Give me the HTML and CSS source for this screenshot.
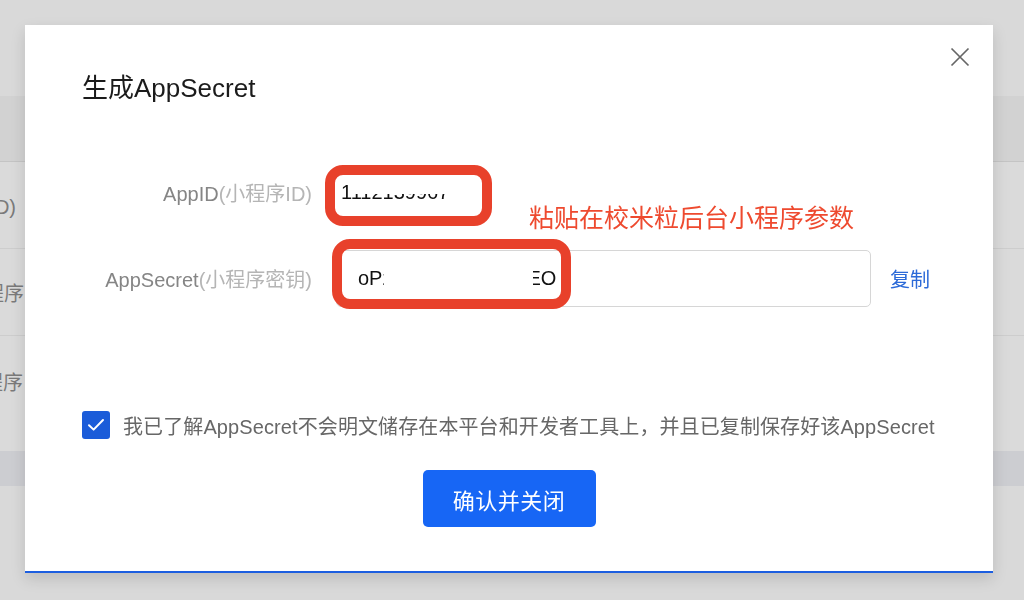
FILE: index.html
```html
<!DOCTYPE html>
<html lang="zh-CN">
<head>
<meta charset="utf-8">
<title>生成AppSecret</title>
<link rel="stylesheet" href="styles.css">
</head>
<body>
<div class="page">
  <div class="bg-top"></div>
  <div class="bg-head"></div>
  <div class="bg-row"><div class="bg-cell"><span>AppID(小程序ID)</span></div></div>
  <div class="bg-row"><div class="bg-cell wide"><span>AppSecret(小程序</span></div></div>
  <div class="bg-row tall"><div class="bg-cell mid"><span>小程序</span></div></div>
  <div class="bg-band"></div>
</div>

<div class="modal">
  <button class="close" aria-label="关闭">
    <svg width="20" height="20" viewBox="0 0 20 20"><path d="M1.5 1.5 L18.5 18.5 M18.5 1.5 L1.5 18.5" stroke="#666" stroke-width="1.7" fill="none"/></svg>
  </button>
  <h1 class="title">生成AppSecret</h1>

  <div class="form">
    <div class="row">
      <div class="label">AppID<span class="sub">(小程序ID)</span></div>
      <div class="plain-value">
        <span>1112139967</span>
        <div class="redact r1"></div>
      </div>
    </div>
    <div class="row">
      <div class="label">AppSecret<span class="sub">(小程序密钥)</span></div>
      <div class="input">
        <span>oPz</span><span class="gap"></span><span>EO</span>
        <div class="redact r2"></div>
      </div>
      <a class="copy">复制</a>
    </div>
  </div>

  <label class="agree">
    <span class="check">
      <svg width="18" height="14" viewBox="0 0 18 14"><path d="M2 7.2 L6.6 11.6 L16 2" stroke="#fff" stroke-width="2" fill="none" stroke-linecap="round" stroke-linejoin="round"/></svg>
    </span>
    <span class="agree-text">我已了解AppSecret不会明文储存在本平台和开发者工具上，并且已复制保存好该AppSecret</span>
  </label>

  <div class="actions">
    <button class="primary">确认并关闭</button>
  </div>

  <div class="mark m1"></div>
  <div class="mark m2"></div>
  <div class="note">粘贴在校米粒后台小程序参数</div>
</div>
</body>
</html>
```

FILE: styles.css
```css
* { box-sizing: border-box; }
html, body { margin: 0; padding: 0; }
body {
  width: 1024px;
  height: 600px;
  overflow: hidden;
  background: #d9d9d9;
  font-family: "Liberation Sans", "Noto Sans CJK SC", sans-serif;
}

.page { display: flex; flex-direction: column; }
.bg-top { height: 96px; background: #d9d9d9; }
.bg-head { height: 66px; background: #d2d2d2; border-bottom: 1px solid #c4c4c4; }
.bg-row {
  height: 87px;
  background: #dadada;
  border-bottom: 1px solid #cdcdcd;
  display: flex;
  align-items: center;
}
.bg-row.tall { height: 115px; border-bottom: none; padding-bottom: 25px; }
.bg-cell {
  width: 16px;
  display: flex;
  justify-content: flex-end;
  overflow: hidden;
  white-space: nowrap;
  font-size: 20px;
  color: #7a7a7a;
}
.bg-cell.wide { width: 24px; }
.bg-cell.mid { width: 23px; }
.bg-cell span { flex: none; }
.bg-band { height: 35px; background: #cccdd1; }

.modal {
  position: fixed;
  left: 25px;
  top: 25px;
  width: 968px;
  height: 548px;
  background: #fff;
  border-bottom: 2px solid #1c5ee0;
  box-shadow: 0 6px 14px rgba(0, 0, 0, 0.13);
  padding: 47px 57px 0;
  display: flex;
  flex-direction: column;
}

.close {
  position: absolute;
  right: 23px;
  top: 22px;
  width: 20px;
  height: 20px;
  padding: 0;
  border: 0;
  background: none;
  display: flex;
}

.title {
  margin: 0;
  font-size: 26px;
  line-height: 32px;
  font-weight: normal;
  color: #1b1b1b;
}

.form {
  margin-top: 60px;
  display: flex;
  flex-direction: column;
  gap: 29px;
}
.row {
  display: flex;
  align-items: center;
  height: 57px;
  gap: 24px;
}
.label {
  width: 230px;
  text-align: right;
  font-size: 20px;
  color: #858585;
  white-space: nowrap;
}
.label .sub { color: #b5b5b5; }

.plain-value {
  position: relative;
  padding-left: 5px;
  font-size: 20px;
  color: #111;
}
.input {
  position: relative;
  width: 535px;
  height: 57px;
  border: 1px solid #d6d6d6;
  border-radius: 5px;
  padding-left: 21px;
  display: flex;
  align-items: center;
  font-size: 20px;
  color: #111;
}
.input .gap { display: inline-block; width: 135px; }
.copy {
  margin-left: -5px;
  font-size: 20px;
  color: #2c6ad8;
  cursor: pointer;
}

.redact { position: absolute; background: #fff; }
.redact.r1 { left: 16px; top: 0; width: 105px; height: 13px; }
.redact.r2 { left: 47px; top: 10px; width: 149px; height: 36px; }

.agree {
  margin-top: 104px;
  display: flex;
  align-items: center;
  gap: 13px;
  height: 28px;
}
.check {
  width: 28px;
  height: 28px;
  border-radius: 3px;
  background: #1b5cd9;
  display: flex;
  align-items: center;
  justify-content: center;
}
.agree-text {
  font-size: 20px;
  color: #676767;
  white-space: nowrap;
  letter-spacing: 0.1px;
}

.actions {
  margin-top: 31px;
  display: flex;
  justify-content: center;
}
.primary {
  width: 173px;
  height: 57px;
  border: 0;
  border-radius: 5px;
  background: #1766f5;
  color: #fff;
  font-family: "Liberation Sans", "Noto Sans CJK SC", sans-serif;
  font-size: 22px;
  letter-spacing: 0.5px;
}

.mark {
  position: absolute;
  border: 10px solid #e8412b;
  border-radius: 18px;
}
.mark.m1 { left: 300px; top: 140px; width: 167px; height: 61px; }
.mark.m2 { left: 307px; top: 214px; width: 239px; height: 70px; }
.note {
  position: absolute;
  left: 504px;
  top: 178px;
  font-size: 25px;
  line-height: 30px;
  color: #ee4a2f;
  white-space: nowrap;
}
```
